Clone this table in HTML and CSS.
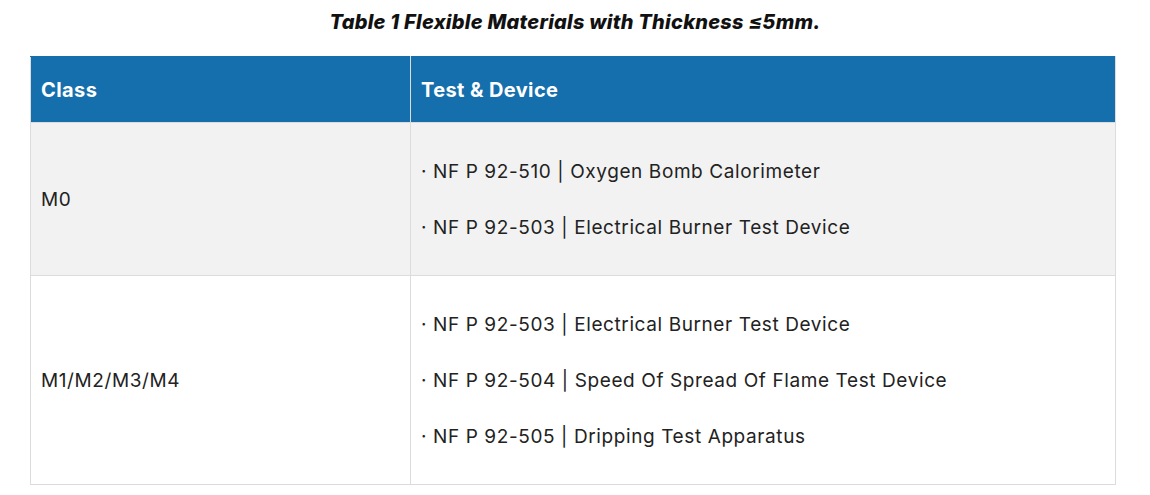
FILE: index.html
```html
<!DOCTYPE html>
<html>
<head>
<meta charset="utf-8">
<link rel="stylesheet" href="styles.css">
</head>
<body>
<div class="page">
  <h3 class="caption">Table 1 Flexible Materials with Thickness ≤5mm.</h3>
  <table class="spec">
    <thead>
      <tr><th class="col-class">Class</th><th>Test &amp; Device</th></tr>
    </thead>
    <tbody>
      <tr class="alt">
        <td>M0</td>
        <td><p>· NF P 92-510 | Oxygen Bomb Calorimeter</p><p>· NF P 92-503 | Electrical Burner Test Device</p></td>
      </tr>
      <tr>
        <td>M1/M2/M3/M4</td>
        <td><p>· NF P 92-503 | Electrical Burner Test Device</p><p>· NF P 92-504 | Speed Of Spread Of Flame Test Device</p><p>· NF P 92-505 | Dripping Test Apparatus</p></td>
      </tr>
    </tbody>
  </table>
</div>
</body>
</html>
```
FILE: styles.css
```css
html, body { margin: 0; padding: 0; background: #fff; }
body { font-family: Inter, "Open Sans", sans-serif; color: #222; }
.page { padding: 10px 34px 0 30px; }
.caption {
  margin: 0 0 22px;
  text-align: center;
  font-size: 20px;
  line-height: 24px;
  font-weight: 800;
  font-style: italic;
  letter-spacing: 0.25px;
  color: #111;
  padding-left: 4px;
}
.spec { width: 1086px; border-collapse: collapse; }
.spec th {
  background: #156fad;
  color: #fff;
  text-align: left;
  font-weight: 700;
  font-size: 20px;
  line-height: 26px;
  letter-spacing: 0.4px;
  padding: 20px 10px 19px;
  border: 1px solid #dcdcdc;
  border-top-color: #156fad;
}
.spec th.col-class { width: 359px; }
.spec td {
  border: 1px solid #dcdcdc;
  padding: 35px 10px 33px;
  font-size: 19px;
  line-height: 28px;
  letter-spacing: 0.6px;
  vertical-align: middle;
  color: #222;
}
.spec tr.alt td { background: #f2f2f2; }
.spec p { margin: 0 0 28px; }
.spec p:last-child { margin-bottom: 0; }
```
